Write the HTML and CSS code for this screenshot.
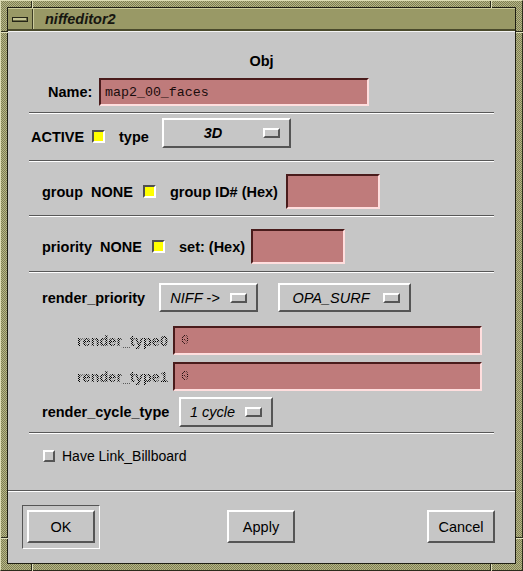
FILE: index.html
```html
<!DOCTYPE html>
<html>
<head>
<meta charset="utf-8">
<title>niffeditor2</title>
<link rel="stylesheet" href="styles.css">
</head>
<body>
<div class="frame">
  <span class="notch nv ntl"></span>
  <span class="notch nv ntr"></span>
  <span class="notch nv nbl"></span>
  <span class="notch nv nbr"></span>
  <span class="notch nh nlt"></span>
  <span class="notch nh nlb"></span>
  <span class="notch nh nrt"></span>
  <span class="notch nh nrb"></span>
  <div class="client">
    <div class="titlebar">
      <div class="menubtn"><span class="menubar"></span></div>
      <div class="title">niffeditor2</div>
    </div>
    <div class="content">
      <div class="form">
        <div class="heading">Obj</div>

        <div class="row row-name">
          <span class="lbl w-name">Name:</span>
          <div class="field f-name">map2_00_faces</div>
        </div>
        <div class="sep s1"></div>

        <div class="row row-active">
          <span class="lbl shift w-active">ACTIVE</span>
          <span class="toggle shift"></span>
          <span class="lbl shift w-type">type</span>
          <div class="optbtn o-3d"><span class="optlbl bold">3D</span><span class="ind"></span></div>
        </div>
        <div class="sep s2"></div>

        <div class="row row-group">
          <span class="lbl w-group">group</span>
          <span class="lbl w-none">NONE</span>
          <span class="toggle"></span>
          <span class="lbl w-gid">group ID# (Hex)</span>
          <div class="field f-hex"></div>
        </div>
        <div class="sep s3"></div>

        <div class="row row-prio">
          <span class="lbl w-prio">priority</span>
          <span class="lbl w-none">NONE</span>
          <span class="toggle"></span>
          <span class="lbl w-set">set: (Hex)</span>
          <div class="field f-hex"></div>
        </div>
        <div class="sep s4"></div>

        <div class="row row-rp">
          <span class="lbl w-rp">render_priority</span>
          <div class="optbtn o-niff"><span class="optlbl">NIFF -&gt;</span><span class="ind"></span></div>
          <div class="optbtn o-opa"><span class="optlbl">OPA_SURF</span><span class="ind"></span></div>
        </div>

        <div class="row row-t0">
          <span class="lbl dim w-rt">render_type0</span>
          <div class="field f-rt"><span class="dimtxt">0</span></div>
        </div>

        <div class="row row-t1">
          <span class="lbl dim w-rt">render_type1</span>
          <div class="field f-rt"><span class="dimtxt">0</span></div>
        </div>

        <div class="row row-cyc">
          <span class="lbl w-cyc">render_cycle_type</span>
          <div class="optbtn o-cyc"><span class="optlbl">1 cycle</span><span class="ind"></span></div>
        </div>
        <div class="sep s5"></div>

        <div class="row row-link">
          <span class="check"></span>
          <span class="plain">Have Link_Billboard</span>
        </div>
      </div>

      <div class="sep-full"></div>

      <div class="buttons">
        <div class="defframe"><div class="pbtn">OK</div></div>
        <div class="pbtn b-apply">Apply</div>
        <div class="pbtn b-cancel">Cancel</div>
      </div>
    </div>
  </div>
</div>
</body>
</html>
```

FILE: styles.css
```css
* { box-sizing: border-box; }
html, body { margin: 0; padding: 0; }
body {
  width: 523px;
  height: 571px;
  overflow: hidden;
  background: #000;
  font-family: "Liberation Sans", Arial, sans-serif;
  color: #000;
}

/* window manager frame */
.frame {
  position: relative;
  width: 523px;
  height: 571px;
  padding: 6px;
  border-top: 1px solid #dcdcb4;
  border-left: 1px solid #dcdcb4;
  border-right: 1px solid #2c2c1c;
  border-bottom: 1px solid #2c2c1c;
  background: repeating-conic-gradient(#b6b688 0 25%, #7f7f53 0 50%) 0 0 / 2px 2px;
}
/* resize-handle breaks in the frame border */
.notch {
  position: absolute;
  background: #2c2c1c;
}
.nv { width: 1px; height: 7px; box-shadow: 1px 0 0 #e0e0bc; }
.nh { width: 7px; height: 1px; box-shadow: 0 1px 0 #e0e0bc; }
.ntl { left: 30px; top: 0; }
.ntr { left: 489px; top: 0; }
.nbl { left: 30px; top: 563px; }
.nbr { left: 489px; top: 563px; }
.nlt { left: 0; top: 30px; }
.nlb { left: 0; top: 536px; }
.nrt { left: 515px; top: 30px; }
.nrb { left: 515px; top: 536px; }

.client {
  height: 100%;
  border: 1px solid #1e1e12;
  display: flex;
  flex-direction: column;
}
.titlebar {
  height: 23px;
  flex: none;
  display: flex;
  align-items: stretch;
  background: #999966;
  border-top: 1px solid #cbcb9d;
  border-bottom: 2px solid #4a4a2c;
}
.menubtn {
  width: 25px;
  flex: none;
  display: flex;
  align-items: center;
  justify-content: center;
  border-right: 1px solid #3c3c24;
  box-shadow: 1px 0 0 #cbcb9d;
}
.menubar {
  display: block;
  width: 16px;
  height: 5px;
  margin-left: -1px;
  background: #c4c494;
  border: 1px solid #262618;
  box-shadow: inset -1px -1px 0 #6e6e48;
}
.title {
  padding-left: 12px;
  display: flex;
  align-items: center;
  font-size: 14.5px;
  font-weight: bold;
  font-style: italic;
  color: #161610;
}

/* client area */
.content {
  flex: 1;
  background: #c6c6c6;
  box-shadow: inset 0 1px 0 #f4f4f4;
  display: flex;
  flex-direction: column;
}
.form {
  margin-left: 21px;
  width: 465px;
  display: flex;
  flex-direction: column;
}
.heading {
  margin-top: 22px;
  height: 16px;
  line-height: 16px;
  text-align: center;
  font-weight: bold;
  font-size: 14.5px;
}
.row {
  display: flex;
  align-items: center;
  flex: none;
}
.lbl {
  flex: none;
  font-size: 14.5px;
  font-weight: bold;
  white-space: nowrap;
}
.shift { margin-top: 7px; }
.plain {
  font-size: 14px;
  white-space: nowrap;
  margin-left: 7px;
}

.sep {
  height: 2px;
  flex: none;
  border-top: 1px solid #585858;
  border-bottom: 1px solid #ffffff;
}
.s1 { margin-top: 6px; }
.s2 { margin-top: 12px; }
.s3 { margin-top: 6px; }
.s4 { margin-top: 7px; }
.s5 { margin-top: 5px; }

.sep-full {
  margin-top: 28px;
  height: 2px;
  flex: none;
  border-top: 1px solid #585858;
  border-bottom: 1px solid #ffffff;
}

/* rows */
.row-name { margin-top: 9px; height: 28px; padding-left: 19px; }
.w-name { width: 51px; }
.f-name { width: 270px; height: 28px; }

.row-active { margin-top: 4px; height: 30px; padding-left: 2px; }
.w-active { width: 61px; }
.w-type { width: 43px; margin-left: 14px; }
.o-3d { width: 129px; height: 30px; }

.row-group { margin-top: 12px; height: 35px; padding-left: 13px; }
.w-group { width: 49px; }
.w-none { width: 52px; }
.w-gid { width: 116px; margin-left: 14px; }
.f-hex { width: 94px; height: 35px; }

.row-prio { margin-top: 12px; height: 35px; padding-left: 13px; }
.w-prio { width: 58px; }
.w-set { width: 72px; margin-left: 14px; }

.row-rp { margin-top: 10px; height: 29px; padding-left: 13px; }
.w-rp { width: 117px; }
.o-niff { width: 99px; height: 29px; }
.o-opa { width: 133px; height: 29px; margin-left: 20px; }

.row-t0 { margin-top: 14px; height: 29px; padding-left: 13px; }
.row-t1 { margin-top: 7px; height: 29px; padding-left: 13px; }
.w-rt { width: 131px; text-align: right; padding-right: 5px; }
.f-rt { width: 309px; height: 29px; }

.row-cyc { margin-top: 6px; height: 30px; padding-left: 13px; }
.w-cyc { width: 137px; }
.o-cyc { width: 94px; height: 30px; }

.row-link { margin-top: 16px; height: 12px; padding-left: 14px; }

/* widgets */
.field {
  flex: none;
  display: flex;
  align-items: center;
  background: #bf7b7b;
  border-top: 2px solid #4a1c1c;
  border-left: 2px solid #4a1c1c;
  border-right: 2px solid #ffdede;
  border-bottom: 2px solid #ffdede;
  padding-left: 4px;
  font-family: "Liberation Mono", "Courier New", monospace;
  font-size: 13.3px;
  color: #1a0c0c;
  white-space: nowrap;
}
.f-rt { padding-left: 6px; }

.dim {
  color: transparent;
  background: repeating-conic-gradient(#000 0 25%, transparent 0 50%) 0 0 / 2px 2px;
  -webkit-background-clip: text;
  background-clip: text;
}
.dimtxt {
  color: transparent;
  background: repeating-conic-gradient(#1a0808 0 25%, transparent 0 50%) 0 0 / 2px 2px;
  -webkit-background-clip: text;
  background-clip: text;
}

.toggle {
  flex: none;
  width: 13px;
  height: 13px;
  background: #ffff00;
  border-top: 2px solid #505050;
  border-left: 2px solid #505050;
  border-right: 2px solid #ffffff;
  border-bottom: 2px solid #ffffff;
}
.check {
  flex: none;
  width: 12px;
  height: 12px;
  background: #c6c6c6;
  border-top: 2px solid #ffffff;
  border-left: 2px solid #ffffff;
  border-right: 2px solid #555555;
  border-bottom: 2px solid #555555;
}

.optbtn {
  flex: none;
  display: flex;
  align-items: center;
  padding: 0 9px;
  background: #c6c6c6;
  border-top: 2px solid #ffffff;
  border-left: 2px solid #ffffff;
  border-right: 2px solid #555555;
  border-bottom: 2px solid #555555;
}
.optlbl {
  flex: 1;
  margin-right: 10px;
  text-align: center;
  font-size: 14.5px;
  font-style: italic;
  white-space: nowrap;
}
.optlbl.bold { font-weight: bold; }
.ind {
  flex: none;
  width: 17px;
  height: 10px;
  background: #c6c6c6;
  border-top: 2px solid #ffffff;
  border-left: 2px solid #ffffff;
  border-right: 2px solid #555555;
  border-bottom: 2px solid #555555;
}

/* action area */
.buttons {
  display: flex;
  align-items: flex-start;
  margin-top: 13px;
  padding-left: 14px;
}
.defframe {
  width: 78px;
  height: 44px;
  padding: 4px;
  border-top: 1px solid #555555;
  border-left: 1px solid #555555;
  border-right: 1px solid #ffffff;
  border-bottom: 1px solid #ffffff;
}
.pbtn {
  width: 68px;
  height: 33px;
  flex: none;
  display: flex;
  align-items: center;
  justify-content: center;
  font-size: 14.5px;
  background: #c6c6c6;
  border-top: 2px solid #ffffff;
  border-left: 2px solid #ffffff;
  border-right: 2px solid #555555;
  border-bottom: 2px solid #555555;
}
.b-apply { margin-left: 127px; margin-top: 5px; }
.b-cancel { margin-left: 132px; margin-top: 5px; }
```
